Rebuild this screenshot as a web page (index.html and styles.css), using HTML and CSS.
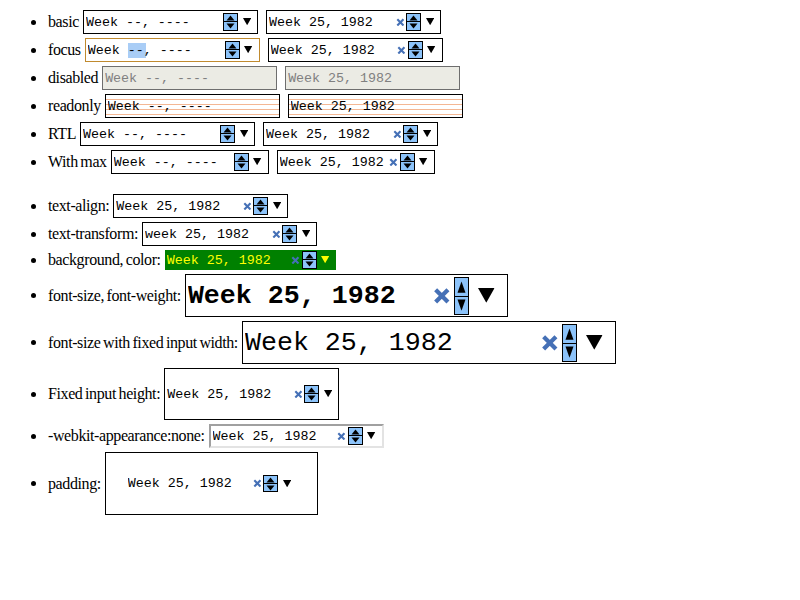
FILE: index.html
```html
<!DOCTYPE html>
<html>
<head>
<meta charset="utf-8">
<link rel="stylesheet" href="styles.css">
</head>
<body>
<svg class="defs" xmlns="http://www.w3.org/2000/svg">
  <symbol id="i-clr" viewBox="0 0 10 10"><path d="M1.5 1.5L8.5 8.5M8.5 1.5L1.5 8.5" stroke="currentColor" stroke-width="2.4" fill="none"/></symbol>
  <symbol id="i-spin" viewBox="0 0 13 16" preserveAspectRatio="none"><polygon points="2.5,6.5 10.5,6.5 6.5,1.5" fill="#000"/><line x1="0" y1="8" x2="13" y2="8" stroke="#000" stroke-width="1" vector-effect="non-scaling-stroke" shape-rendering="crispEdges"/><polygon points="2.5,9.5 10.5,9.5 6.5,14.5" fill="#000"/></symbol>
  <symbol id="i-drop" viewBox="0 0 8 7" preserveAspectRatio="none"><polygon points="0,0 8,0 4,7" fill="currentColor"/></symbol>
</svg>

<ul class="list">
  <li><span class="lbl">basic</span>
    <span class="wk empty"><span class="val">Week --, ----</span><span class="clr"><svg><use href="#i-clr"/></svg></span><span class="spin"><svg><use href="#i-spin"/></svg></span><span class="drop"><svg><use href="#i-drop"/></svg></span></span>
    <span class="wk"><span class="val">Week 25, 1982</span><span class="clr"><svg><use href="#i-clr"/></svg></span><span class="spin"><svg><use href="#i-spin"/></svg></span><span class="drop"><svg><use href="#i-drop"/></svg></span></span>
  </li>
  <li><span class="lbl">focus</span>
    <span class="wk empty focus"><span class="val">Week <span class="sel">--</span>, ----</span><span class="clr"><svg><use href="#i-clr"/></svg></span><span class="spin"><svg><use href="#i-spin"/></svg></span><span class="drop"><svg><use href="#i-drop"/></svg></span></span>
    <span class="wk"><span class="val">Week 25, 1982</span><span class="clr"><svg><use href="#i-clr"/></svg></span><span class="spin"><svg><use href="#i-spin"/></svg></span><span class="drop"><svg><use href="#i-drop"/></svg></span></span>
  </li>
  <li><span class="lbl">disabled</span>
    <span class="wk disabled"><span class="val">Week --, ----</span></span>
    <span class="wk disabled"><span class="val">Week 25, 1982</span></span>
  </li>
  <li><span class="lbl">readonly</span>
    <span class="wk readonly"><span class="val">Week --, ----</span></span>
    <span class="wk readonly"><span class="val">Week 25, 1982</span></span>
  </li>
  <li><span class="lbl">RTL</span>
    <span class="wk empty"><span class="val">Week --, ----</span><span class="clr"><svg><use href="#i-clr"/></svg></span><span class="spin"><svg><use href="#i-spin"/></svg></span><span class="drop"><svg><use href="#i-drop"/></svg></span></span>
    <span class="wk"><span class="val">Week 25, 1982</span><span class="clr"><svg><use href="#i-clr"/></svg></span><span class="spin"><svg><use href="#i-spin"/></svg></span><span class="drop"><svg><use href="#i-drop"/></svg></span></span>
  </li>
  <li><span class="lbl">With max</span>
    <span class="wk empty narrow"><span class="val">Week --, ----</span><span class="clr"><svg><use href="#i-clr"/></svg></span><span class="spin"><svg><use href="#i-spin"/></svg></span><span class="drop"><svg><use href="#i-drop"/></svg></span></span>
    <span class="wk narrow"><span class="val">Week 25, 1982</span><span class="clr"><svg><use href="#i-clr"/></svg></span><span class="spin"><svg><use href="#i-spin"/></svg></span><span class="drop"><svg><use href="#i-drop"/></svg></span></span>
  </li>
</ul>

<ul class="list">
  <li><span class="lbl">text-align:</span>
    <span class="wk"><span class="val">Week 25, 1982</span><span class="clr"><svg><use href="#i-clr"/></svg></span><span class="spin"><svg><use href="#i-spin"/></svg></span><span class="drop"><svg><use href="#i-drop"/></svg></span></span>
  </li>
  <li><span class="lbl">text-transform:</span>
    <span class="wk lower"><span class="val">Week 25, 1982</span><span class="clr"><svg><use href="#i-clr"/></svg></span><span class="spin"><svg><use href="#i-spin"/></svg></span><span class="drop"><svg><use href="#i-drop"/></svg></span></span>
  </li>
  <li><span class="lbl">background, color:</span>
    <span class="wk colored"><span class="val">Week 25, 1982</span><span class="clr"><svg><use href="#i-clr"/></svg></span><span class="spin"><svg><use href="#i-spin"/></svg></span><span class="drop"><svg><use href="#i-drop"/></svg></span></span>
  </li>
  <li><span class="lbl">font-size, font-weight:</span>
    <span class="wk big"><span class="val">Week 25, 1982</span><span class="clr"><svg><use href="#i-clr"/></svg></span><span class="spin"><svg><use href="#i-spin"/></svg></span><span class="drop"><svg><use href="#i-drop"/></svg></span></span>
  </li>
  <li><span class="lbl">font-size with fixed input width:</span>
    <span class="wk wide"><span class="val">Week 25, 1982</span><span class="clr"><svg><use href="#i-clr"/></svg></span><span class="spin"><svg><use href="#i-spin"/></svg></span><span class="drop"><svg><use href="#i-drop"/></svg></span></span>
  </li>
  <li><span class="lbl">Fixed input height:</span>
    <span class="wk tall"><span class="val">Week 25, 1982</span><span class="clr"><svg><use href="#i-clr"/></svg></span><span class="spin"><svg><use href="#i-spin"/></svg></span><span class="drop"><svg><use href="#i-drop"/></svg></span></span>
  </li>
  <li><span class="lbl">-webkit-appearance:none:</span>
    <span class="wk plain"><span class="val">Week 25, 1982</span><span class="clr"><svg><use href="#i-clr"/></svg></span><span class="spin"><svg><use href="#i-spin"/></svg></span><span class="drop"><svg><use href="#i-drop"/></svg></span></span>
  </li>
  <li><span class="lbl">padding:</span>
    <span class="wk padded"><span class="val">Week 25, 1982</span><span class="clr"><svg><use href="#i-clr"/></svg></span><span class="spin"><svg><use href="#i-spin"/></svg></span><span class="drop"><svg><use href="#i-drop"/></svg></span></span>
  </li>
</ul>
</body>
</html>
```

FILE: styles.css
```css
html { background: #fff; }
body {
  margin: 8px;
  font-family: "Liberation Serif", "Times New Roman", serif;
  font-size: 16px;
  color: #000;
}
.defs { display: block; width: 0; height: 0; overflow: hidden; }

.list { list-style: none; margin: 0; padding: 0 0 0 40px; }
.list + .list { margin-top: 16px; }
.list li {
  display: flex;
  align-items: center;
  gap: 4px;
  padding: 2px 0;
}
.list li::before {
  content: "";
  flex: none;
  width: 5px;
  height: 5px;
  border-radius: 50%;
  background: #000;
  margin-left: -17px;
  margin-right: 8px;
}
.lbl { white-space: nowrap; letter-spacing: -0.4px; word-spacing: -1px; }

.wk {
  display: inline-flex;
  align-items: center;
  flex: none;
  box-sizing: border-box;
  width: 175px;
  height: 24px;
  border: 1px solid #000;
  padding: 0 0.45em 0 2px;
  background: #fff;
  color: #000;
  font-family: "Liberation Mono", "Courier New", monospace;
  font-size: 13.33px;
}
.wk + .wk { margin-left: 4px; }
.val { flex: 1; white-space: pre; overflow: hidden; }
.wk svg { display: block; width: 100%; height: 100%; }

.clr { flex: none; width: 0.66em; height: 0.66em; color: #4570b6; }
.empty .clr { visibility: hidden; }
.spin {
  flex: none;
  box-sizing: border-box;
  width: 15px;
  height: calc(1.5em - 2px);
  margin-left: 0.12em;
  border: 1px solid #000;
  background: #8cc3fa;
}
.drop { flex: none; width: 0.62em; height: 0.55em; margin-left: 0.35em; }

.focus { border-color: #c08a2e; }
.sel { background: #a9cdf6; box-shadow: 2px 0 0 #a9cdf6; }
.disabled { background: #ebebe4; border-color: #6e6e6e; color: #808080; }
.readonly {
  background: repeating-linear-gradient(to bottom, #fff 0 4px, #f4b793 4px 5px);
}
.narrow { width: 158px; }
.lower { text-transform: lowercase; }
.colored {
  width: 171px;
  height: 20px;
  border: none;
  background: #008000;
  color: #ff0;
}
.colored .clr { color: #4570b6; }
.big { width: 323px; height: 43px; font-size: 26.67px; font-weight: bold; }
.wide { width: 374px; height: 43px; font-size: 26.67px; }
.tall { height: 52px; }
.plain {
  border: 2px solid;
  border-color: #a0a0a0 #e3e3e3 #e3e3e3 #a0a0a0;
  padding-left: 2px;
}
.padded { width: 213px; height: 63px; padding: 20px 26px 20px 22px; }
```
